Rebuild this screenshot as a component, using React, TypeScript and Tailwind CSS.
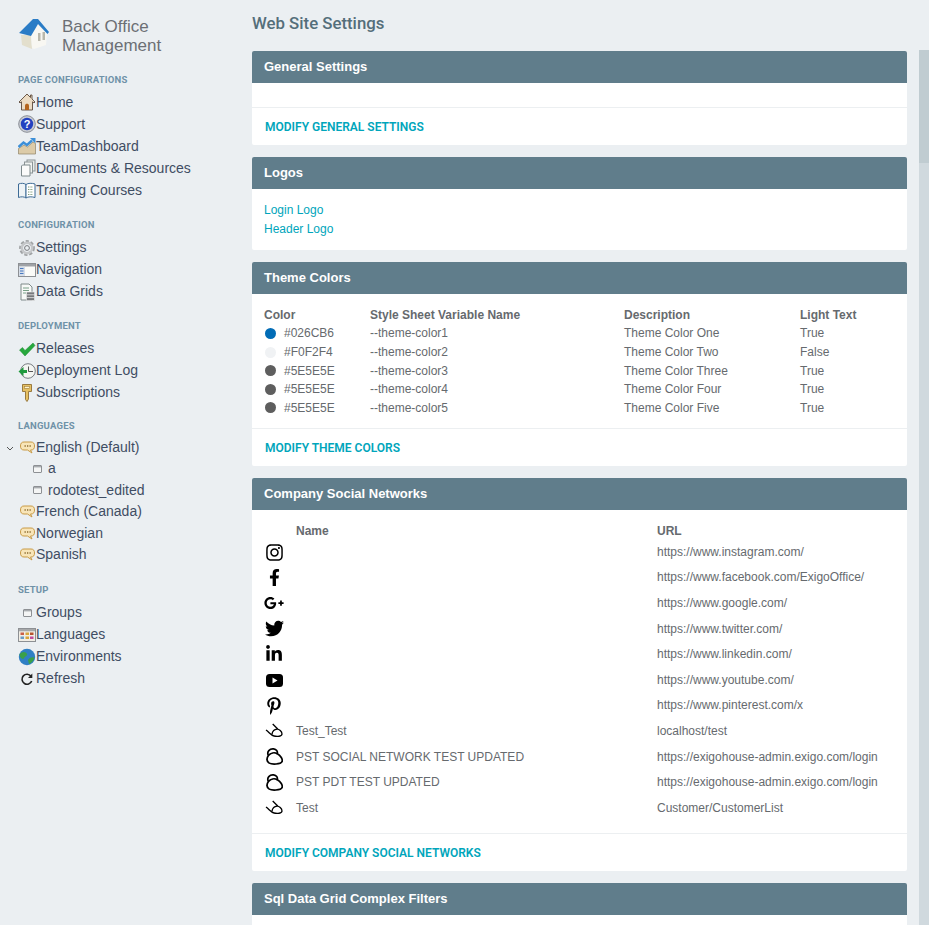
import React from "react";
import { FaInstagram, FaFacebookF, FaGooglePlusG, FaTwitter, FaLinkedinIn, FaPinterestP } from "react-icons/fa";

const S = ({ children }: { children: React.ReactNode }) => (
  <svg width="18" height="18" viewBox="0 0 18 18" className="shrink-0">{children}</svg>
);

const HomeIcon = () => (
  <S>
    <path d="M9 1 1 9 2 10 3.500 8.800V17H14.500V8.800L16 10 17 9 14 6V2H12.500V4.500Z" fill="#ecdcc4" stroke="#5d4a3a" strokeWidth=".9" />
    <path d="M7 17V12.500C7 10 11 10 11 12.500V17Z" fill="#b5651d" />
  </S>
);
const HelpIcon = () => (
  <S>
    <circle cx="9" cy="9" r="8.300" fill="#c9ccd2" stroke="#8b8f97" />
    <circle cx="9" cy="9" r="6.200" fill="#2341c0" />
    <text x="9" y="13" fontSize="11" fontWeight="700" fill="#fff" textAnchor="middle" fontFamily="Liberation Sans, sans-serif">?</text>
  </S>
);
const ChartIcon = () => (
  <S>
    <path d="M.5 11.500 6 8 9.500 10 15 5 17.500 6.500V17H.5Z" fill="#dccba8" stroke="#8f8468" strokeWidth=".7" />
    <path d="M.5 10 5.500 5.500 9 8 14 3.500" fill="none" stroke="#3c8fd8" strokeWidth="2.400" />
    <path d="M12 1H17.500V6.500Z" fill="#3c8fd8" />
  </S>
);
const DocsIcon = () => (
  <S>
    <rect x="9" y="1" width="8" height="11" fill="#e8ecea" stroke="#8b9496" />
    <rect x="6.500" y="3" width="8" height="11" fill="#f0f3f1" stroke="#8b9496" />
    <path d="M4.500 6H12V17H3.500V7Z" fill="#fbfbfa" stroke="#7e8a8c" />
  </S>
);
const BookIcon = () => (
  <S>
    <path d="M.5 3C3 2 6 2 8 3.500V17C6 15.500 3 15.500 .5 16.500Z" fill="#eef3f6" stroke="#3d6b96" />
    <path d="M8 3.500C10 2 14 2 17 3V16.500C14 15.500 10 15.500 8 17Z" fill="#fff" stroke="#3d6b96" />
    <path d="M10 6H15M10 8.500H15M10 11H15M10 13.500H15" stroke="#7d9c7b" strokeDasharray="1 .6" />
  </S>
);
const GearIcon = () => (
  <S>
    <circle cx="9" cy="9" r="6" fill="none" stroke="#8b8d8f" strokeWidth="3.800" strokeDasharray="2.800 1.600" opacity=".8" />
    <circle cx="9" cy="9" r="5.200" fill="none" stroke="#c5c7c9" strokeWidth="2.400" />
    <circle cx="9" cy="9" r="2.400" fill="none" stroke="#77797c" />
  </S>
);
const NavIcon = () => (
  <S>
    <rect x=".5" y="2.500" width="17" height="13" fill="#fbfbf8" stroke="#8d9094" />
    <rect x="1" y="3" width="16" height="2.500" fill="#9fa2a6" />
    <rect x="1" y="5.500" width="6" height="9.500" fill="#d5dde8" />
    <path d="M2 7.500H5.500M2 10H5.500M2 12.500H5.500" stroke="#4879c0" />
  </S>
);
const GridDocIcon = () => (
  <S>
    <path d="M3 1H11L14 4V17H3Z" fill="#f7f9f7" stroke="#7f8a8a" />
    <path d="M5 5H11M5 7.500H11M5 10H8" stroke="#79a088" />
    <rect x="8.500" y="9" width="8" height="8.500" fill="#77797c" stroke="#f0f0f0" strokeWidth=".6" />
    <path d="M8.500 11.800H16.500M8.500 14.600H16.500" stroke="#e9e9e9" strokeWidth=".8" />
  </S>
);
const CheckIcon = () => (
  <S>
    <path d="M1.500 10 4.500 7.500 7 10.500 15 3 17 5.500 7 16Z" fill="#27a83d" stroke="#1c8a30" strokeWidth=".5" />
  </S>
);
const LogIcon = () => (
  <S>
    <circle cx="10" cy="9" r="7.300" fill="#f4f5f2" stroke="#777c80" />
    <path d="M10.500 4.500V9.500H15" fill="none" stroke="#555" />
    <path d="M.5 9.500 5.500 5V8H9V11H5.500V14Z" fill="#1f9a3d" />
  </S>
);
const KeyIcon = () => (
  <S>
    <path d="M4.500 .5H13.500V7.500H10.500V15L9 17.500 7.500 15.500V7.500H4.500Z" fill="#e6c062" stroke="#917134" strokeWidth=".9" />
    <rect x="6.500" y="2.500" width="5" height="1.800" fill="#fff5cf" stroke="#917134" strokeWidth=".5" />
  </S>
);
const BubbleIcon = () => (
  <svg width="15" height="13" viewBox="0 0 15 13" className="shrink-0">
    <path d="M4 1H11C13.500 1 14.500 2.500 14.500 5 14.500 7.500 13.500 9 11 9H10.500L12 12 7.500 9H4C1.500 9 .500 7.500 .500 5 .500 2.500 1.500 1 4 1Z" fill="#f8e5b8" stroke="#c89a45" />
    <path d="M4.500 5H5.800M7 5H8.300M9.500 5H10.800" stroke="#8a6a30" strokeWidth="1.400" />
  </svg>
);
const SmallBox = () => (
  <svg width="9" height="8" viewBox="0 0 9 8" className="shrink-0">
    <rect x=".5" y=".5" width="8" height="7" rx=".5" fill="#f4f5f5" stroke="#8d9094" />
    <rect x="1" y="1" width="7" height="1.400" fill="#a9acb0" />
  </svg>
);
const LangIcon = () => (
  <S>
    <rect x=".5" y="2.500" width="17" height="13" fill="#f1eee6" stroke="#8d9094" />
    <rect x="1" y="3" width="16" height="2.300" fill="#a6a8aa" />
    <rect x="2.500" y="6.500" width="3.500" height="2.500" fill="#c95f46" />
    <rect x="7.500" y="6.500" width="3.500" height="2.500" fill="#d8a53b" />
    <rect x="12" y="6.500" width="3.500" height="2.500" fill="#b6532f" />
    <rect x="2.500" y="10.500" width="3.500" height="2.500" fill="#6a9bc4" />
    <rect x="7.500" y="10.500" width="3.500" height="2.500" fill="#d8a53b" />
    <rect x="12" y="10.500" width="3.500" height="2.500" fill="#c24d9b" />
  </S>
);
const GlobeIcon = () => (
  <S>
    <circle cx="9" cy="9" r="8.200" fill="#2f7fc4" />
    <path d="M1.500 6.500C4 3 8 3.500 9 6 10 8 6 8.500 5.500 11 4 11 2 10 1.500 6.500ZM10 12C11.500 9.500 14 9 16.500 9.500 16 12.500 13 15.500 11 16Z" fill="#3aa04a" />
  </S>
);
const RefreshIcon = () => (
  <S>
    <path d="M13 6.200A5 5 0 1 0 13.700 11" fill="none" stroke="#222" strokeWidth="1.600" />
    <path d="M14.300 3.500V8H10Z" fill="#222" />
  </S>
);

const Heading = ({ children, mt }: { children: React.ReactNode; mt: string }) => (
  <div className={`${mt} pl-[18px] h-[18px] flex items-center text-[9.500px] leading-none font-bold tracking-[0.2px] text-[#6f92a8] font-['Roboto',sans-serif]`}>
    {children}
  </div>
);

const Item = ({ icon, label, h = "h-[22px]" }: { icon: React.ReactNode; label: string; h?: string }) => (
  <div className={`${h} flex items-center pl-[18px] text-[#3f4d63] text-[14px]`}>
    <span className="w-[18px] h-[18px] flex items-center justify-center shrink-0">{icon}</span>
    <span>{label}</span>
  </div>
);

const Sub = ({ label }: { label: string }) => (
  <div className="h-[21.500px] flex items-center pl-[33px] text-[#3f4d63] text-[14px]">
    <span className="w-[15px] flex shrink-0"><SmallBox /></span>
    <span>{label}</span>
  </div>
);

const Panel = ({ title, children }: { title: string; children?: React.ReactNode }) => (
  <section className="bg-white rounded-[2px] mb-3">
    <header className="h-8 bg-[#607d8b] text-white text-[13px] font-bold px-3 flex items-center rounded-t-[2px]">{title}</header>
    {children}
  </section>
);

const Footer = ({ label }: { label: string }) => (
  <div className="border-t border-[#eceff1] h-[38px] pl-[13px] pt-[1px] flex items-center text-[12px] font-semibold text-[#00a5bb] font-['Roboto',sans-serif]">
    {label}
  </div>
);

const colors = [
  ["#026CB6", "--theme-color1", "Theme Color One", "True"],
  ["#F0F2F4", "--theme-color2", "Theme Color Two", "False"],
  ["#5E5E5E", "--theme-color3", "Theme Color Three", "True"],
  ["#5E5E5E", "--theme-color4", "Theme Color Four", "True"],
  ["#5E5E5E", "--theme-color5", "Theme Color Five", "True"],
];

const Scribble = () => (
  <svg width="18" height="16" viewBox="0 0 18 16" fill="none" stroke="#000" strokeWidth="1.300">
    <path d="M7.700 1 13 6.300M1 7C4 9 6 12.500 9 13 12 13.800 17 13.500 17 11 17 8.500 14 6 12 6.200 9.500 6.500 7.500 8.500 7 11" />
  </svg>
);
const Cloudy = () => (
  <svg width="17" height="17" viewBox="0 0 18 18" fill="none" stroke="#000" strokeWidth="1.800">
    <path d="M2.500 8C.5 4 4 .5 8 1 11 1.500 12.500 3.500 12 6 15.500 8 18 12 17 14.500 15.500 17.500 6 17.500 3.500 16 .5 14 .5 11 2.500 8Z" />
    <path d="M2.500 8C5 5 9 4.500 12 6" />
  </svg>
);
const Youtube = () => (
  <svg width="17" height="13" viewBox="0 0 17 13">
    <rect x="0" y="0" width="17" height="13" rx="3.500" fill="#000" />
    <path d="M6.500 3.500 11.500 6.500 6.500 9.500Z" fill="#fff" />
  </svg>
);

const socials: [React.ReactNode, string, string][] = [
  [<FaInstagram size={19} />, "", "https://www.instagram.com/"],
  [<FaFacebookF size={17} />, "", "https://www.facebook.com/ExigoOffice/"],
  [<FaGooglePlusG size={20} />, "", "https://www.google.com/"],
  [<FaTwitter size={19} />, "", "https://www.twitter.com/"],
  [<FaLinkedinIn size={18} />, "", "https://www.linkedin.com/"],
  [<Youtube />, "", "https://www.youtube.com/"],
  [<FaPinterestP size={18} />, "", "https://www.pinterest.com/x"],
  [<Scribble />, "Test_Test", "localhost/test"],
  [<Cloudy />, "PST SOCIAL NETWORK TEST UPDATED", "https://exigohouse-admin.exigo.com/login"],
  [<Cloudy />, "PST PDT TEST UPDATED", "https://exigohouse-admin.exigo.com/login"],
  [<Scribble />, "Test", "Customer/CustomerList"],
];

export default function App() {
  return (
    <div className="flex h-[925px] w-[929px] overflow-hidden bg-[#ebeff2] font-['Liberation_Sans',sans-serif] text-[12px] leading-[18.57px] text-[#666a6e]">
      <aside className="w-[252px] shrink-0">
        <div className="flex items-start pl-[18px] pt-[17px]">
          <svg width="33" height="33" viewBox="0 0 33 33" className="shrink-0">
            <path d="M3 18H13L14 32 4 28Z" fill="#e3dfcd" />
            <path d="M13 18 20 8 29 17 28 28 16 32 14 31Z" fill="#f8f7f2" />
            <rect x="20" y="16" width="2.500" height="8" fill="#b9b8ac" />
            <rect x="24.500" y="15" width="2.500" height="8" fill="#b9b8ac" />
            <path d="M1 16 15 2 20 2 31 15 29.500 17 20 7 13 19Z" fill="#2a7cc6" />
          </svg>
          <div className="ml-[11px] text-[17px] leading-[19px] text-[#6c6f75]">Back Office<br />Management</div>
        </div>
        <Heading mt="mt-[16px]">PAGE CONFIGURATIONS</Heading>
        <div className="mt-[2px]">
          <Item icon={<HomeIcon />} label="Home" />
          <Item icon={<HelpIcon />} label="Support" />
          <Item icon={<ChartIcon />} label="TeamDashboard" />
          <Item icon={<DocsIcon />} label="Documents & Resources" />
          <Item icon={<BookIcon />} label="Training Courses" />
        </div>
        <Heading mt="mt-[15px]">CONFIGURATION</Heading>
        <div className="mt-[2.500px]">
          <Item icon={<GearIcon />} label="Settings" />
          <Item icon={<NavIcon />} label="Navigation" />
          <Item icon={<GridDocIcon />} label="Data Grids" />
        </div>
        <Heading mt="mt-[14.500px]">DEPLOYMENT</Heading>
        <div className="mt-[2.500px]">
          <Item icon={<CheckIcon />} label="Releases" />
          <Item icon={<LogIcon />} label="Deployment Log" />
          <Item icon={<KeyIcon />} label="Subscriptions" />
        </div>
        <Heading mt="mt-[13px]">LANGUAGES</Heading>
        <div className="mt-[2px]">
          <div className="h-[21.500px] flex items-center pl-[18px] text-[#3f4d63] text-[14px] relative">
            <svg width="8" height="6" viewBox="0 0 8 6" className="absolute left-[6px] top-[9px]" fill="none" stroke="#555" strokeWidth="1"><path d="M1 1 4 4 7 1" /></svg>
            <span className="w-[18px] h-[18px] flex items-center justify-center shrink-0"><BubbleIcon /></span>
            <span>English (Default)</span>
          </div>
          <Sub label="a" />
          <Sub label="rodotest_edited" />
          <Item icon={<BubbleIcon />} label="French (Canada)" h="h-[21.500px]" />
          <Item icon={<BubbleIcon />} label="Norwegian" h="h-[21.500px]" />
          <Item icon={<BubbleIcon />} label="Spanish" h="h-[21.500px]" />
        </div>
        <Heading mt="mt-[15.500px]">SETUP</Heading>
        <div className="mt-[2.500px]">
          <Item icon={<SmallBox />} label="Groups" />
          <Item icon={<LangIcon />} label="Languages" />
          <Item icon={<GlobeIcon />} label="Environments" />
          <Item icon={<RefreshIcon />} label="Refresh" />
        </div>
      </aside>

      <main className="w-[655px] shrink-0">
        <h1 className="h-[51px] pt-[12px] text-[16.800px] leading-[22px] text-[#546e7a] font-['Roboto',sans-serif] font-medium">Web Site Settings</h1>
        <Panel title="General Settings">
          <div className="h-6" />
          <Footer label="MODIFY GENERAL SETTINGS" />
        </Panel>
        <Panel title="Logos">
          <div className="px-3 py-3 text-[#00a5bb]">
            <div>Login Logo</div>
            <div>Header Logo</div>
          </div>
        </Panel>
        <Panel title="Theme Colors">
          <div className="px-3 pt-[11.700px] pb-[10.700px]">
            <div className="grid grid-cols-[106px_254px_176px_1fr] font-bold">
              <div>Color</div>
              <div>Style Sheet Variable Name</div>
              <div>Description</div>
              <div>Light Text</div>
            </div>
            {colors.map(([hex, name, desc, light]) => (
              <div key={name} className="grid grid-cols-[106px_254px_176px_1fr]">
                <div className="flex items-center">
                  <span className="ml-[1px] w-[11px] h-[11px] rounded-full" style={{ backgroundColor: hex }} />
                  <span className="ml-[8px]">{hex}</span>
                </div>
                <div>{name}</div>
                <div>{desc}</div>
                <div>{light}</div>
              </div>
            ))}
          </div>
          <Footer label="MODIFY THEME COLORS" />
        </Panel>
        <Panel title="Company Social Networks">
          <div className="px-3 pt-3 pb-3">
            <div className="grid grid-cols-[32px_361px_1fr] font-bold mb-[-1.200px]">
              <div />
              <div>Name</div>
              <div>URL</div>
            </div>
            {socials.map(([icon, name, url], i) => (
              <div key={i} className="grid grid-cols-[32px_361px_1fr] h-[25.600px] items-center">
                <div className="text-black flex w-[20px] justify-center">{icon}</div>
                <div>{name}</div>
                <div className="whitespace-nowrap">{url}</div>
              </div>
            ))}
          </div>
          <Footer label="MODIFY COMPANY SOCIAL NETWORKS" />
        </Panel>
        <Panel title="Sql Data Grid Complex Filters">
          <div className="h-20" />
        </Panel>
      </main>

      <div className="ml-[12px] mt-[50px] w-[10px] h-[875px] bg-[#d0d9de]">
        <div className="h-[113px] bg-[#c0ccd1]" />
      </div>
    </div>
  );
}
